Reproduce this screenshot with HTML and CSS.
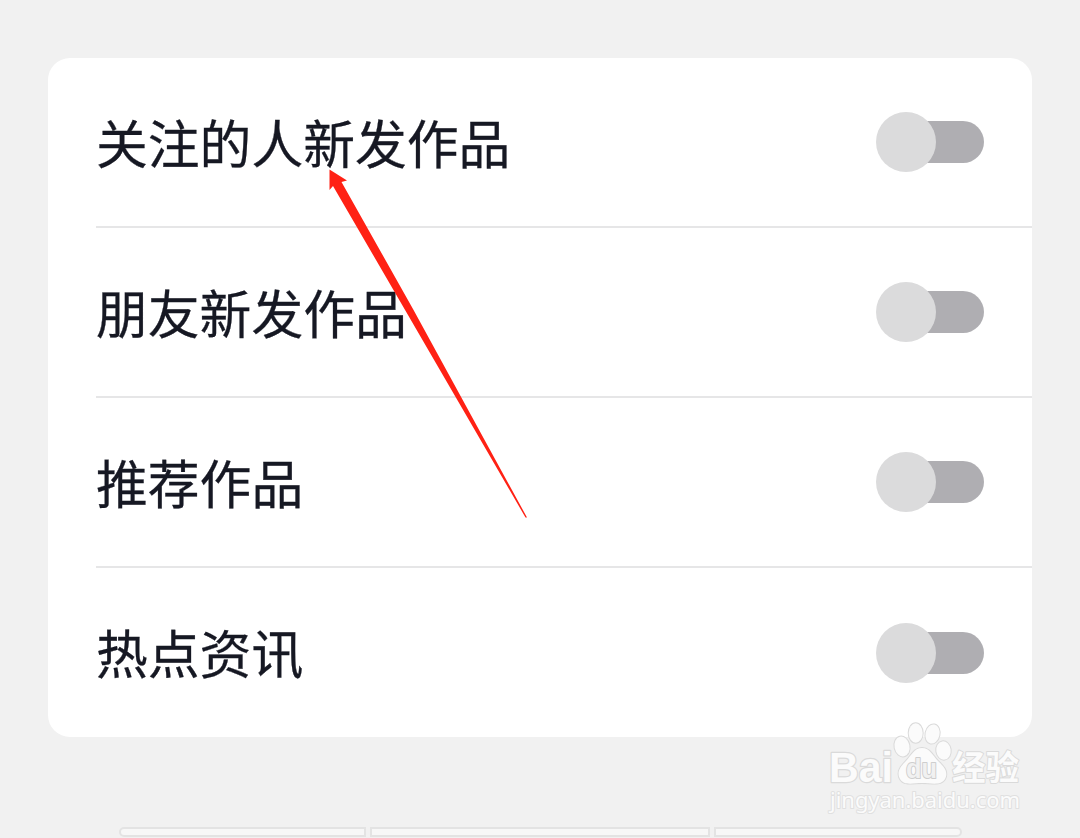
FILE: index.html
```html
<!DOCTYPE html>
<html lang="zh-CN">
<head>
    <meta charset="UTF-8">
    <meta name="viewport" content="width=device-width, initial-scale=1.0">
    <title>通知设置</title>
    <link rel="stylesheet" href="styles.css">
</head>
<body>
    <div class="card">
        <div class="row">
            <span class="label">关注的人新发作品</span>
            <div class="switch"><div class="knob"></div></div>
        </div>
        <div class="row">
            <span class="label">朋友新发作品</span>
            <div class="switch"><div class="knob"></div></div>
        </div>
        <div class="row">
            <span class="label">推荐作品</span>
            <div class="switch"><div class="knob"></div></div>
        </div>
        <div class="row">
            <span class="label">热点资讯</span>
            <div class="switch"><div class="knob"></div></div>
        </div>
    </div>

    <div class="bars">
        <div class="bar bar-first"></div>
        <div class="bar bar-middle"></div>
        <div class="bar bar-last"></div>
    </div>

    <!-- Red pointer over the list -->
    <svg class="arrow" width="200" height="352" viewBox="328 168 200 352">
        <path fill="#ff2114" d="M329.5 169.5L347 180.5L341.5 182L413 309L527 517.5L525.5 517.5L404.5 309L333 186L329.5 190Z"/>
    </svg>

    <!-- Watermark -->
    <svg class="watermark" width="210" height="100" viewBox="820 718 210 100">
        <g class="mark">
            <text class="brand" x="829" y="782" textLength="64" lengthAdjust="spacingAndGlyphs">Bai</text>
            <ellipse cx="902" cy="746.5" rx="7.5" ry="10" transform="rotate(-12 902 746.5)"/>
            <ellipse cx="915.7" cy="733" rx="7" ry="9.7"/>
            <ellipse cx="932.5" cy="734" rx="7" ry="9.7" transform="rotate(12 932.5 734)"/>
            <ellipse cx="943.5" cy="750.5" rx="7.2" ry="9.2" transform="rotate(-8 943.5 750.5)"/>
            <path d="M922 748C914 748 911 756 906 761C901 766 896 772 900 779C904 786 913 783 922 783C931 783 941 786 945 779C949 771 943 766 938 761C933 756 930 748 922 748Z"/>
            <text class="du" x="906" y="778" textLength="31" lengthAdjust="spacingAndGlyphs">du</text>
            <text class="brand-cn" x="952" y="779.5" textLength="67" lengthAdjust="spacingAndGlyphs">经验</text>
            <text class="site" x="830" y="807.5" textLength="190" lengthAdjust="spacingAndGlyphs">jingyan.baidu.com</text>
        </g>
    </svg>
</body>
</html>
```

FILE: styles.css
```css
* {
    box-sizing: border-box;
}

body {
    margin: 0;
    padding: 58px 48px 0;
    height: 838px;
    overflow: hidden;
    position: relative;
    background: #f1f1f1;
    font-family: "Noto Sans CJK SC", sans-serif;
}

.card {
    height: 679px;
    padding-left: 48px;
    background: #fff;
    border-radius: 22px;
}

.row {
    display: flex;
    justify-content: space-between;
    align-items: center;
    height: 170px;
    padding-right: 48px;
    border-bottom: 2px solid #e6e6e7;
}

.row:last-child {
    height: 169px;
    border-bottom: none;
}

.label {
    padding-bottom: 1px;
    color: #161823;
    font-size: 51.8px;
    line-height: 76px;
    -webkit-text-stroke: 0.3px #161823;
}

.switch {
    display: flex;
    align-items: center;
    width: 108px;
    height: 42px;
    border-radius: 21px;
    background: linear-gradient(to right, transparent 30px, #afaeb2 30px);
}

.knob {
    width: 60px;
    height: 60px;
    flex: none;
    border-radius: 50%;
    background: #dbdbdc;
}

.bars {
    display: flex;
    gap: 4px;
    margin: 90px 0 0 71px;
}

.bar {
    height: 10px;
    background: #f7f7f7;
    border: 2px solid #e3e3e3;
}

.bar-first {
    width: 247px;
    border-radius: 5px 0 0 5px;
}

.bar-middle {
    width: 340px;
}

.bar-last {
    width: 248px;
    border-radius: 0 5px 5px 0;
}

.arrow {
    position: absolute;
    left: 328px;
    top: 168px;
}

.watermark {
    position: absolute;
    left: 820px;
    top: 718px;
}

.mark {
    fill: #fbfbfb;
    stroke: #dadada;
    stroke-width: 2px;
    stroke-linejoin: round;
    paint-order: stroke;
}

.brand {
    font: bold 43px "Liberation Sans", sans-serif;
    stroke-width: 2.5px;
}

.du {
    font: bold 27px "Liberation Sans", sans-serif;
    fill: #f1f1f1;
    stroke: #cecece;
}

.brand-cn {
    font: bold 34px "Noto Sans CJK SC", sans-serif;
}

.site {
    font: 22px "Noto Sans", sans-serif;
    stroke: #e0e0e0;
}
```
